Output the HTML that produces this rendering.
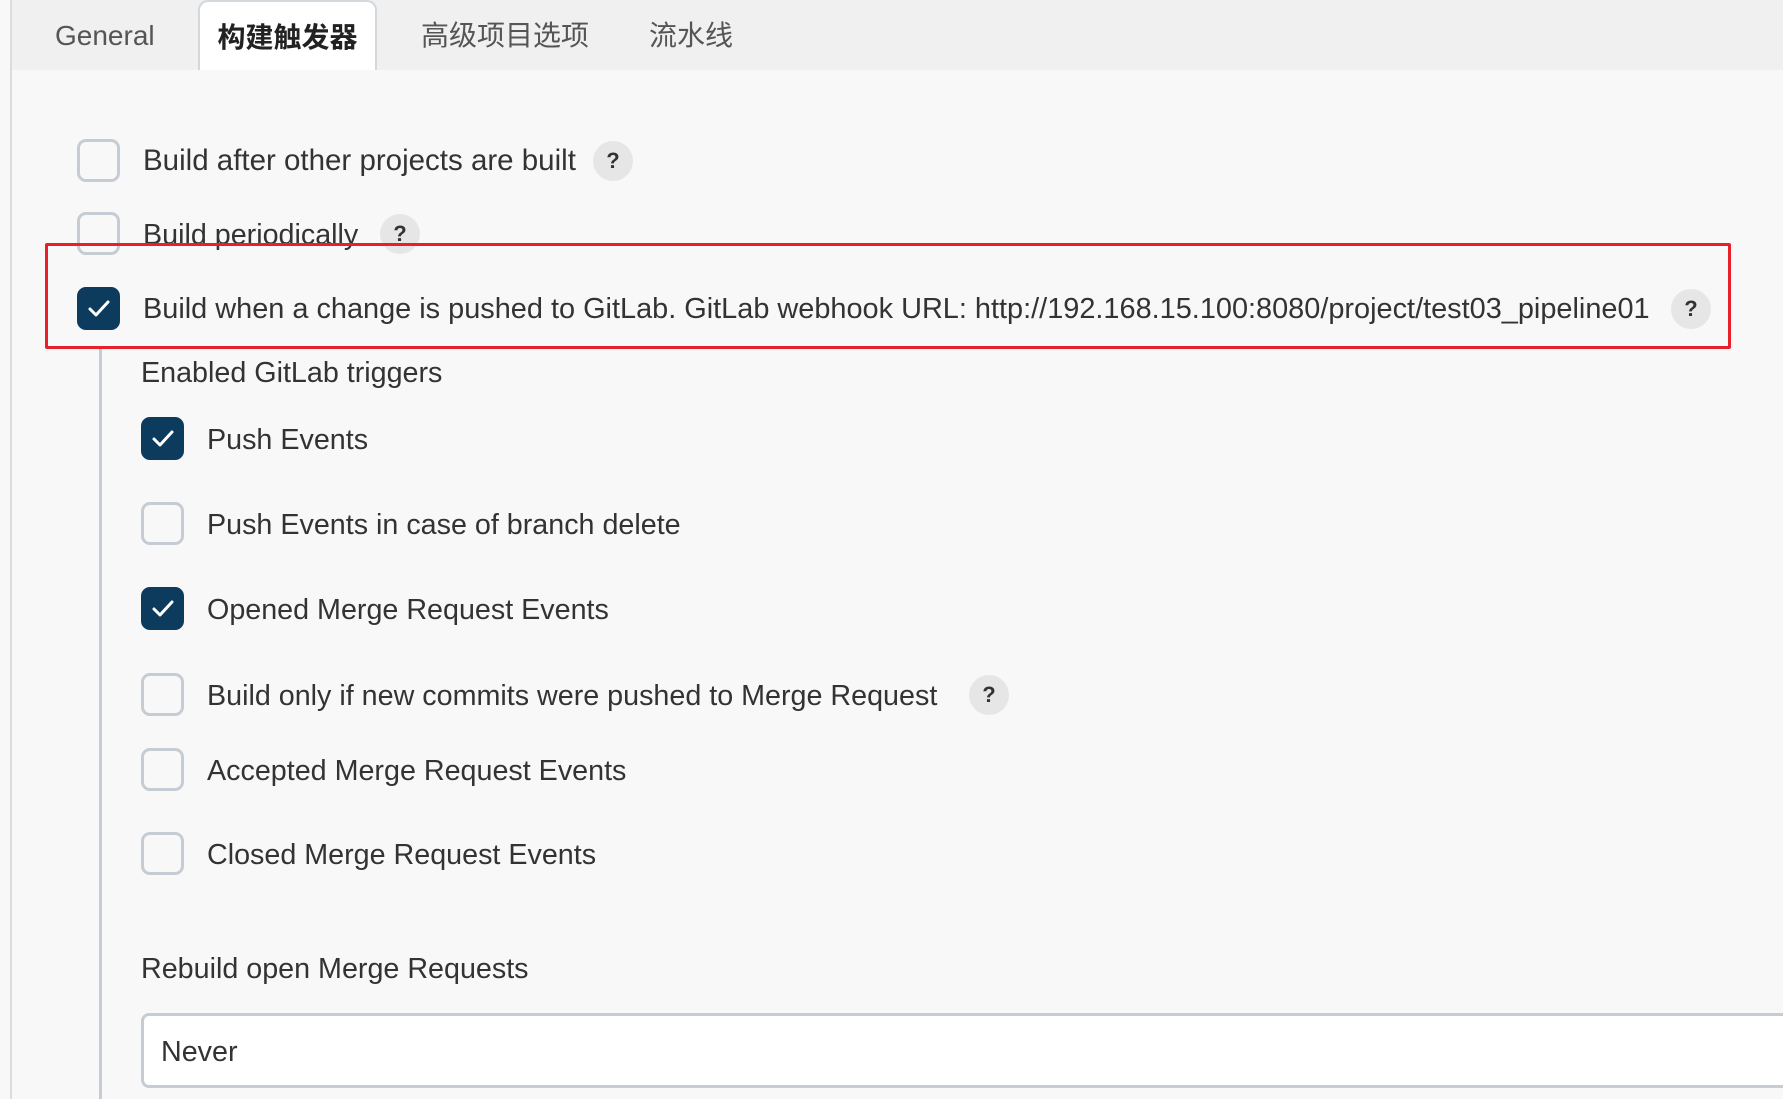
<!DOCTYPE html>
<html><head><meta charset="utf-8"><style>
*{box-sizing:border-box;margin:0;padding:0}
body{width:1783px;height:1099px;overflow:hidden;background:#f8f8f8;font-family:"Liberation Sans","Noto Sans CJK SC",sans-serif;color:#333;position:relative}
.bar{position:absolute;left:11px;top:0;width:1772px;height:70px;background:#f0f0f0}
.lborder{position:absolute;left:10px;top:0;width:2px;height:1099px;background:#d8dde2}
.tab{position:absolute;top:0;height:70px;line-height:72px;font-size:28px;color:#555}
.active{left:198px;width:179px;background:#fff;border:2px solid #d3d8dd;border-bottom:none;border-radius:10px 10px 0 0;text-align:center;color:#222;font-weight:bold}
.cb{position:absolute;width:43px;height:43px;border:3px solid #c5ccd3;border-radius:9px;background:#f8f8f8}
.cb.on{background:#0d3b5e;border-color:#0d3b5e}
.cb.on svg{position:absolute;left:7px;top:8px}
.t{position:absolute;font-size:28.7px;line-height:32px;white-space:nowrap;color:#333}
.q{position:absolute;width:40px;height:40px;border-radius:50%;background:#e6e6e6;color:#333;font-weight:bold;font-size:22px;line-height:40px;text-align:center}
.red{position:absolute;left:45px;top:243px;width:1686px;height:106px;border:3px solid #e8202a;border-radius:2px}
.vl{position:absolute;left:99px;top:349px;width:3px;height:750px;background:#c5ccd3}
.sel{position:absolute;left:141px;top:1013px;width:1700px;height:75px;border:3px solid #c5ccd3;border-radius:8px;background:#fff}
</style></head><body>
<div class="bar"></div>
<div class="lborder"></div>
<div class="tab" style="left:55px">General</div>
<div class="tab active">构建触发器</div>
<div class="tab" style="left:421px">高级项目选项</div>
<div class="tab" style="left:649px">流水线</div>

<div class="cb" style="left:77px;top:139px"></div>
<div class="t" style="left:143px;top:145px;font-size:29.5px">Build after other projects are built</div>
<div class="q" style="left:593px;top:141px">?</div>

<div class="cb" style="left:77px;top:212px"></div>
<div class="t" style="left:143px;top:219px">Build periodically</div>
<div class="q" style="left:380px;top:214px">?</div>

<div class="cb on" style="left:77px;top:287px"><svg width="24" height="22" viewBox="0 0 24 22"><path d="M3 11 L9 17 L21 4" stroke="#fff" stroke-width="3" fill="none" stroke-linecap="round" stroke-linejoin="round"/></svg></div>
<div class="t" style="left:143px;top:293px;font-size:28.9px">Build when a change is pushed to GitLab. GitLab webhook URL: http://192.168.15.100:8080/project/test03_pipeline01</div>
<div class="q" style="left:1671px;top:289px">?</div>
<div class="red"></div>

<div class="vl"></div>
<div class="t" style="left:141px;top:357px">Enabled GitLab triggers</div>

<div class="cb on" style="left:141px;top:417px"><svg width="24" height="22" viewBox="0 0 24 22"><path d="M3 11 L9 17 L21 4" stroke="#fff" stroke-width="3" fill="none" stroke-linecap="round" stroke-linejoin="round"/></svg></div>
<div class="t" style="left:207px;top:424px">Push Events</div>

<div class="cb" style="left:141px;top:502px"></div>
<div class="t" style="left:207px;top:509px">Push Events in case of branch delete</div>

<div class="cb on" style="left:141px;top:587px"><svg width="24" height="22" viewBox="0 0 24 22"><path d="M3 11 L9 17 L21 4" stroke="#fff" stroke-width="3" fill="none" stroke-linecap="round" stroke-linejoin="round"/></svg></div>
<div class="t" style="left:207px;top:594px">Opened Merge Request Events</div>

<div class="cb" style="left:141px;top:673px"></div>
<div class="t" style="left:207px;top:680px">Build only if new commits were pushed to Merge Request</div>
<div class="q" style="left:969px;top:675px">?</div>

<div class="cb" style="left:141px;top:748px"></div>
<div class="t" style="left:207px;top:755px">Accepted Merge Request Events</div>

<div class="cb" style="left:141px;top:832px"></div>
<div class="t" style="left:207px;top:839px">Closed Merge Request Events</div>

<div class="t" style="left:141px;top:953px">Rebuild open Merge Requests</div>
<div class="sel"></div>
<div class="t" style="left:161px;top:1036px">Never</div>
</body></html>
